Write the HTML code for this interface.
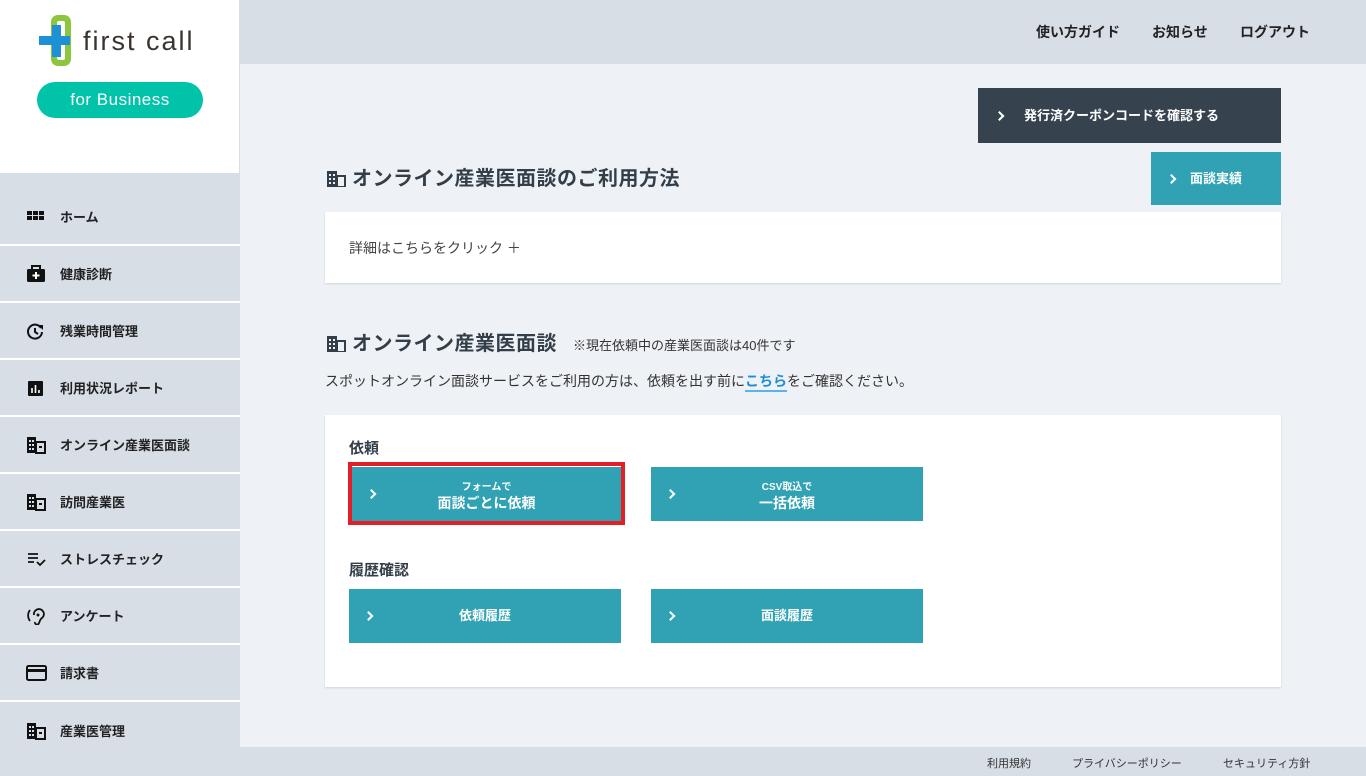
<!DOCTYPE html>
<html><head><meta charset="utf-8"><style>
*{box-sizing:border-box;margin:0;padding:0}
body{width:1366px;height:776px;overflow:hidden;background:#eef1f5;font-family:"Liberation Sans","Noto Sans CJK JP",sans-serif;color:#333;position:relative}
.side{position:absolute;left:0;top:0;width:240px;height:776px;background:#d8dee6}
.logo{position:absolute;left:0;top:0;width:239px;height:173px;background:#fff}
.biz{position:absolute;left:37px;top:82px;width:166px;height:36px;border-radius:18px;background:#00c3aa;color:#fff;font-size:17px;text-align:center;line-height:36px;letter-spacing:.5px}
.nav{position:absolute;left:0;top:189px;width:240px}
.nav div{height:57px;border-bottom:2px solid #fff;display:flex;align-items:center;padding-left:26px;font-size:13px;font-weight:bold;color:#222}
.nav div:last-child{border-bottom:none}
.nav i{display:inline-block;width:20px;height:18px;margin-right:14px;position:relative}
.hdr{position:absolute;left:240px;top:0;right:0;height:64px;background:#d8dee6}
.hdr span{position:absolute;top:22px;font-size:14px;font-weight:bold;color:#222}
.foot{position:absolute;left:240px;top:747px;right:0;height:29px;background:#d8dee6}
.foot span{position:absolute;top:8px;font-size:11px;color:#333}
.btnd{position:absolute;left:978px;top:88px;width:303px;height:55px;background:#36434f;color:#fff;font-size:13px;font-weight:bold;line-height:55px;padding-left:46px}
.btnt{position:absolute;background:#30a2b4;color:#fff;font-weight:bold;text-align:center}
.chev{position:absolute;top:50%;width:7px;height:7px;border-right:2px solid #fff;border-top:2px solid #fff;transform:translateY(-50%) rotate(45deg)}
h2{position:absolute;font-size:20px;font-weight:bold;color:#333e48;letter-spacing:.5px}
.bld{display:inline-block;width:20px;height:17px;vertical-align:-2px;margin-right:6px}
.card{position:absolute;background:#fff;box-shadow:0 1px 2px rgba(0,0,0,.12)}
</style></head><body>
<div class="side">
 <div class="logo">
  <svg style="position:absolute;left:38px;top:15px" width="34" height="52" viewBox="38 15 34 52"><rect x="51" y="15" width="20" height="51" rx="7" fill="#8cc63f"/><rect x="57" y="21" width="8" height="39" rx="2" fill="#fff"/><rect x="39" y="36" width="31" height="9" fill="#1e90d6"/><rect x="52" y="25" width="9" height="32" fill="#1e90d6"/></svg>
  <div style="position:absolute;left:83px;top:26px;font-size:27px;color:#3a3330;letter-spacing:2px">first call</div>
  <div class="biz">for Business</div>
 </div>
 <div class="nav">
  <div><i><svg width="18" height="18"><g fill="#111"><rect x="1" y="3" width="5" height="4"/><rect x="7" y="3" width="5" height="4"/><rect x="13" y="3" width="5" height="4"/><rect x="1" y="8" width="5" height="4"/><rect x="7" y="8" width="5" height="4"/><rect x="13" y="8" width="5" height="4"/></g></svg></i>ホーム</div>
  <div><i><svg width="20" height="18"><rect x="1" y="4" width="18" height="13" rx="1.5" fill="#111"/><rect x="6" y="1" width="8" height="4" fill="none" stroke="#111" stroke-width="2"/><path d="M10 7v7M6.5 10.5h7" stroke="#fff" stroke-width="2"/></svg></i>健康診断</div>
  <div><i><svg width="20" height="18"><path d="M15 6a7 7 0 1 0 1 4" fill="none" stroke="#111" stroke-width="2"/><path d="M12 3h5v5z" fill="#111"/><path d="M9 6v4l3 2" fill="none" stroke="#111" stroke-width="2"/></svg></i>残業時間管理</div>
  <div><i><svg width="20" height="18"><rect x="2" y="2" width="15" height="15" rx="1" fill="#111"/><path d="M6 9v5M9.5 6v8M13 11v3" stroke="#fff" stroke-width="1.6"/></svg></i>利用状況レポート</div>
  <div><i><svg width="20" height="18" viewBox="0 0 20 18"><rect x="1" y="1" width="9" height="16" fill="#111"/><rect x="10" y="6" width="9" height="11" fill="none" stroke="#111" stroke-width="2"/><g fill="#d8dee6"><rect x="3" y="4" width="2" height="2"/><rect x="6" y="4" width="2" height="2"/><rect x="3" y="8" width="2" height="2"/><rect x="6" y="8" width="2" height="2"/><rect x="3" y="12" width="2" height="2"/><rect x="6" y="12" width="2" height="2"/></g><rect x="13" y="10" width="3" height="2" fill="#111"/></svg></i>オンライン産業医面談</div>
  <div><i><svg width="20" height="18" viewBox="0 0 20 18"><rect x="1" y="1" width="9" height="16" fill="#111"/><rect x="10" y="6" width="9" height="11" fill="none" stroke="#111" stroke-width="2"/><g fill="#d8dee6"><rect x="3" y="4" width="2" height="2"/><rect x="6" y="4" width="2" height="2"/><rect x="3" y="8" width="2" height="2"/><rect x="6" y="8" width="2" height="2"/><rect x="3" y="12" width="2" height="2"/><rect x="6" y="12" width="2" height="2"/></g><rect x="13" y="10" width="3" height="2" fill="#111"/></svg></i>訪問産業医</div>
  <div><i><svg width="20" height="18"><path d="M2 4h10M2 8h10M2 12h6M11 12l3 3 5-5" fill="none" stroke="#111" stroke-width="1.8"/></svg></i>ストレスチェック</div>
  <div><i><svg width="20" height="18"><path d="M4 3a9 9 0 0 0 0 11" fill="none" stroke="#111" stroke-width="1.8"/><path d="M8 8a5 5 0 1 1 8 3c-2 1-2 3-3 5a2 2 0 0 1-4-1" fill="none" stroke="#111" stroke-width="1.8"/><circle cx="12" cy="8" r="1.5" fill="#111"/></svg></i>アンケート</div>
  <div><i><svg width="22" height="18"><rect x="1" y="2" width="19" height="14" rx="1.5" fill="none" stroke="#111" stroke-width="2"/><rect x="1" y="5" width="19" height="3" fill="#111"/></svg></i>請求書</div>
  <div><i><svg width="20" height="18" viewBox="0 0 20 18"><rect x="1" y="1" width="9" height="16" fill="#111"/><rect x="10" y="6" width="9" height="11" fill="none" stroke="#111" stroke-width="2"/><g fill="#d8dee6"><rect x="3" y="4" width="2" height="2"/><rect x="6" y="4" width="2" height="2"/><rect x="3" y="8" width="2" height="2"/><rect x="6" y="8" width="2" height="2"/><rect x="3" y="12" width="2" height="2"/><rect x="6" y="12" width="2" height="2"/></g><rect x="13" y="10" width="3" height="2" fill="#111"/></svg></i>産業医管理</div>
 </div>
</div>
<div class="hdr"><span style="left:796px">使い方ガイド</span><span style="left:912px">お知らせ</span><span style="left:1000px">ログアウト</span></div>

<div class="btnd"><span class="chev" style="left:18px"></span>発行済クーポンコードを確認する</div>
<div class="btnt" style="left:1151px;top:152px;width:130px;height:53px;line-height:53px;font-size:13px;padding-left:0"><span class="chev" style="left:17px"></span>面談実績</div>

<h2 style="left:326px;top:162px"><svg class="bld" viewBox="0 0 20 17"><rect x="1" y="1" width="10" height="16" fill="#333e48"/><rect x="11" y="6" width="8" height="11" fill="none" stroke="#333e48" stroke-width="2"/><g fill="#eef1f5"><rect x="3" y="4" width="2" height="2"/><rect x="7" y="4" width="2" height="2"/><rect x="3" y="8" width="2" height="2"/><rect x="7" y="8" width="2" height="2"/><rect x="3" y="12" width="2" height="2"/><rect x="7" y="12" width="2" height="2"/></g></svg>オンライン産業医面談のご利用方法</h2>
<div class="card" style="left:325px;top:212px;width:956px;height:71px"><div style="position:absolute;left:24px;top:26px;font-size:14px;color:#444">詳細はこちらをクリック ＋</div></div>

<h2 style="left:326px;top:327px"><svg class="bld" viewBox="0 0 20 17"><rect x="1" y="1" width="10" height="16" fill="#333e48"/><rect x="11" y="6" width="8" height="11" fill="none" stroke="#333e48" stroke-width="2"/><g fill="#eef1f5"><rect x="3" y="4" width="2" height="2"/><rect x="7" y="4" width="2" height="2"/><rect x="3" y="8" width="2" height="2"/><rect x="7" y="8" width="2" height="2"/><rect x="3" y="12" width="2" height="2"/><rect x="7" y="12" width="2" height="2"/></g></svg>オンライン産業医面談<span style="font-size:13px;font-weight:normal;margin-left:16px;color:#333;letter-spacing:0">※現在依頼中の産業医面談は40件です</span></h2>
<div style="position:absolute;left:325px;top:371px;font-size:14px;color:#333">スポットオンライン面談サービスをご利用の方は、依頼を出す前に<span style="color:#1e8fd6;font-weight:bold;border-bottom:2px solid #5ab4ea;padding-bottom:1px">こちら</span>をご確認ください。</div>

<div class="card" style="left:325px;top:415px;width:956px;height:272px">
 <div style="position:absolute;left:24px;top:22px;font-size:15px;font-weight:bold;color:#333e48">依頼</div>
 <div style="position:absolute;left:23px;top:47px;width:277px;height:63px;border:4px solid #e41e26"></div>
 <div class="btnt" style="left:27px;top:52px;width:269px;height:54px"><span class="chev" style="left:16px"></span><div style="font-size:10px;margin-top:11px">フォームで</div><div style="font-size:14px">面談ごとに依頼</div></div>
 <div class="btnt" style="left:326px;top:52px;width:272px;height:54px"><span class="chev" style="left:16px"></span><div style="font-size:10px;margin-top:11px">CSV取込で</div><div style="font-size:14px">一括依頼</div></div>
 <div style="position:absolute;left:24px;top:144px;font-size:15px;font-weight:bold;color:#333e48">履歴確認</div>
 <div class="btnt" style="left:24px;top:174px;width:272px;height:54px;line-height:54px;font-size:13px"><span class="chev" style="left:16px"></span>依頼履歴</div>
 <div class="btnt" style="left:326px;top:174px;width:272px;height:54px;line-height:54px;font-size:13px"><span class="chev" style="left:16px"></span>面談履歴</div>
</div>

<div class="foot"><span style="left:747px">利用規約</span><span style="left:832px">プライバシーポリシー</span><span style="left:983px">セキュリティ方針</span></div>
</body></html>
